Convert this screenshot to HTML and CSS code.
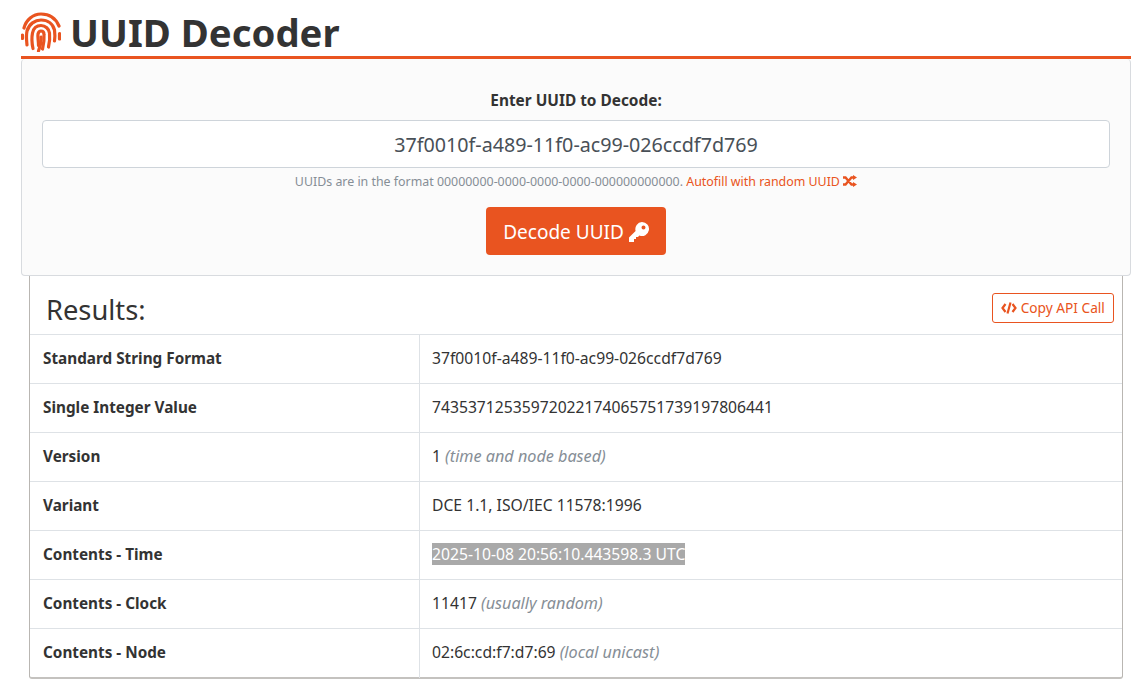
FILE: index.html
```html
<!DOCTYPE html>
<html lang="en">
<head>
<meta charset="utf-8">
<title>UUID Decoder</title>
<link rel="stylesheet" href="styles.css">
</head>
<body>
<div class="page">
  <header class="title">
    <svg class="logo" viewBox="0 0 40 40" fill="none" stroke="#e95420" stroke-width="3.200" stroke-linecap="round">
      <path d="M3 16C5 8 12 2 20 2c9 0 15 5 18 12"/>
      <path d="M1.500 23v3.500M38.500 21.500v5.500"/>
      <path d="M6 33c-.5-5-1-9 0-14C8 12 14 8 20 8c7 0 12 4 13.500 10 .5 4 .5 8 0 11"/>
      <path d="M12 36.500c-1-4.500-1.500-10.500-.5-15.500C12.500 16 16 13.500 20 13.500c4.500 0 8 3.500 8.500 7.500.5 5 0 10-1 14"/>
      <path d="M17.500 33.500c0-5-1-8.500-.5-11.500.5-2 1.500-3 3-3 2 0 3 1.500 3 3.500.5 5.500-.5 10.500-1.500 14.500"/>
      <path d="M20 25c.5 5-1 10-2.500 14"/>
    </svg>
    <h1 class="heading">UUID Decoder</h1>
  </header>

  <section class="form-card">
    <label class="form-label" for="uuid">Enter UUID to Decode:</label>
    <input class="uuid-input" id="uuid" type="text" value="37f0010f-a489-11f0-ac99-026ccdf7d769">
    <p class="hint">UUIDs are in the format 00000000-0000-0000-0000-000000000000. <a class="link" href="#">Autofill with random UUID <svg class="shuffle" viewBox="0 0 14 12" fill="none" stroke="#e95420" stroke-width="2.400"><path d="M0 2.500h2.500l6 7h2.500M0 9.500h2.500l6-7h2.500"/><path d="M10 0 14 2.500 10 5zM10 7 14 9.500 10 12z" fill="#e95420" stroke="none"/></svg></a></p>
    <button class="decode-btn" type="button">Decode UUID <svg class="key" viewBox="0 0 20 20"><path fill="#fff" fill-rule="evenodd" d="M13 0a7 7 0 1 1-2.600 13.500L9 15H7v2H5v3H0v-4.500l6.600-6.600A7 7 0 0 1 13 0zm1.500 3.500a2 2 0 1 0 0 4 2 2 0 0 0 0-4z"/></svg></button>
  </section>

  <section class="results">
    <div class="results-head">
      <h2 class="results-title">Results:</h2>
      <button class="copy-btn" type="button"><svg class="code" viewBox="0 0 16 12" fill="none" stroke="#e95420" stroke-width="2.200"><path d="M4.500 2 1.500 6l3 4M11.500 2l3 4-3 4"/><path d="M9.500 .5 6.500 11.500"/></svg> Copy API Call</button>
    </div>
    <table class="table">
      <tr><th>Standard String Format</th><td>37f0010f-a489-11f0-ac99-026ccdf7d769</td></tr>
      <tr><th>Single Integer Value</th><td>74353712535972022174065751739197806441</td></tr>
      <tr><th>Version</th><td>1 <em class="note">(time and node based)</em></td></tr>
      <tr><th>Variant</th><td>DCE 1.1, ISO/IEC 11578:1996</td></tr>
      <tr><th>Contents - Time</th><td><span class="selected">2025-10-08 20:56:10.443598.3 UTC</span></td></tr>
      <tr><th>Contents - Clock</th><td>11417 <em class="note">(usually random)</em></td></tr>
      <tr><th>Contents - Node</th><td>02:6c:cd:f7:d7:69 <em class="note">(local unicast)</em></td></tr>
    </table>
  </section>
</div>
</body>
</html>
```
FILE: styles.css
```css
* { box-sizing: border-box; }
html, body { margin: 0; background: #fff; }
body {
  font-family: "Noto Sans", "Open Sans", sans-serif;
  font-size: 16px;
  color: #333;
  overflow: hidden;
}
.page { width: 1110px; margin-left: 21px; height: 686px; }
.title {
  height: 59px;
  border-bottom: 3px solid #e95420;
  display: flex;
  align-items: flex-start;
  padding-top: 12px;
  gap: 9px;
}
.logo { width: 40px; height: 40px; flex: none; }
.heading {
  margin: -2px 0 0;
  font-size: 38.300px;
  line-height: 44px;
  font-weight: 700;
  color: #333;
}
.form-card {
  height: 217px;
  background: #fbfbfb;
  border: 1px solid #d8dbdf;
  border-top: 0;
  border-radius: 4px;
  padding: 32px 20px 0;
  display: flex;
  flex-direction: column;
  align-items: center;
}
.form-label { font-weight: 700; font-size: 15.400px; line-height: 20px; color: #333; }
.uuid-input {
  width: 100%;
  height: 48px;
  margin-top: 9px;
  border: 1px solid #ced4da;
  border-radius: 4px;
  background: #fff;
  font: 19.700px "Noto Sans", sans-serif;
  color: #495057;
  text-align: center;
  padding: 0 16px;
}
.hint { margin: 6px 0 0; font-size: 12.400px; line-height: 16px; color: #868e96; }
.link { color: #e95420; text-decoration: none; }
.shuffle { width: 14px; height: 12px; vertical-align: -1px; }
.decode-btn {
  margin-top: 17px;
  width: 180px;
  height: 48px;
  background: #e95420;
  border: 0;
  border-radius: 4px;
  color: #fff;
  font: 19px "Noto Sans", sans-serif;
  padding: 2px 0 0;
}
.key { width: 20px; height: 20px; vertical-align: -3px; }
.results {
  margin: 0 8px;
  height: 403px;
  border: 1px solid #c9c7c4;
  border-top: 0;
  border-bottom: 2px solid #c4c2bf;
  border-left-color: #b9b6b2;
  border-right-color: #b9b6b2;
  border-radius: 0 0 3px 3px;
}
.results-head {
  height: 58px;
  display: flex;
  justify-content: space-between;
  align-items: flex-start;
  padding: 17px 8px 0 16px;
}
.results-title { margin: 0; font-weight: 400; font-size: 27.300px; line-height: 34px; color: #333; }
.copy-btn {
  width: 122px;
  height: 30px;
  background: #fff;
  border: 1px solid #e95420;
  border-radius: 3px;
  color: #e95420;
  font: 13.700px "Noto Sans", sans-serif;
  padding: 0 0 2px;
}
.code { width: 16px; height: 12px; vertical-align: -1px; }
.table { width: 100%; border-collapse: collapse; table-layout: fixed; }
.table tr { height: 49px; }
.table th, .table td {
  border-top: 1px solid #dee2e6;
  padding: 0 12px 2px 12.500px;
  text-align: left;
  font-size: 15.700px;
  color: #333;
}
.table th { width: 389px; font-weight: 700; font-size: 15.300px; padding-left: 13px; border-right: 1px solid #dee2e6; }
.note { color: #868e96; font-size: 16.200px; }
.selected { background: #a9a9a9; color: #fff; }
```
